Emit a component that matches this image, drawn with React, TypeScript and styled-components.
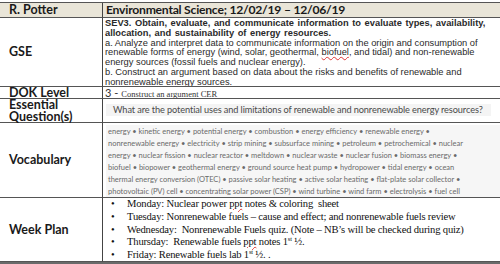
import React from "react";
import styled, { createGlobalStyle } from "styled-components";

const Global = createGlobalStyle`
  html, body { margin: 0; padding: 0; background: #ffffff; }
  body { width: 500px; height: 264px; overflow: hidden; }
`;

const Page = styled.div`
  width: 500px;
  height: 264px;
  padding-top: 2px;
  box-sizing: border-box;
  background: #fff;
`;

const Table = styled.div`
  display: grid;
  grid-template-columns: 103px 1fr;
  border-top: 1px solid #555;
  border-bottom: 2px solid #6a6a6a;
`;

const Label = styled.div<{ $h: number; $bg?: string }>`
  height: ${(p) => p.$h}px;
  box-sizing: border-box;
  border-bottom: 1px solid #555;
  border-right: 1px solid #444;
  background: ${(p) => p.$bg || "#fff"};
  font-family: "Lato", "DejaVu Sans", sans-serif;
  font-weight: 700;
  font-size: 12.5px;
  line-height: 11.5px;
  color: #1a1a1a;
  padding-left: 9px;
  display: flex;
  align-items: center;
`;

const Cell = styled.div<{ $h: number; $bg?: string }>`
  height: ${(p) => p.$h}px;
  box-sizing: border-box;
  border-bottom: 1px solid #555;
  background: ${(p) => p.$bg || "#fff"};
  overflow: hidden;
`;

const HeaderText = styled.div`
  font-family: "Lato", "DejaVu Sans", sans-serif;
  font-weight: 700;
  font-size: 12.2px;
  letter-spacing: -0.25px;
  line-height: 14px;
  color: #1a1a1a;
  padding-left: 3px;
`;

const Gse = styled.div`
  font-family: "Liberation Sans", Arial, sans-serif;
  font-size: 9.3px;
  line-height: 9.8px;
  color: #2a2a2a;
  padding: 1px 0 0 2px;
  white-space: nowrap;
`;

const B = styled.span`
  font-weight: 700;
  word-spacing: 1px;
`;

const Squiggle = styled.span`
  text-decoration: underline wavy #d33;
  text-decoration-thickness: 1px;
  text-underline-offset: 1px;
`;

const Dok = styled.div`
  display: flex;
  align-items: baseline;
  gap: 3px;
  padding-left: 2px;
  color: #333;
`;

const DokNum = styled.span`
  font-family: "Lato", "DejaVu Sans", sans-serif;
  font-size: 11px;
  line-height: 11px;
`;

const DokText = styled.span`
  font-family: "Liberation Serif", "Times New Roman", serif;
  font-size: 8.5px;
  line-height: 11px;
`;

const QuestionBox = styled.div`
  display: inline-block;
  margin: 3px 0 0 3px;
  padding: 0 8px 0 7px;
  background: #f4f4f4;
  font-family: "Lato", "DejaVu Sans", sans-serif;
  font-size: 9.2px;
  letter-spacing: -0.1px;
  line-height: 12px;
  color: #4a4a4a;
  white-space: nowrap;
`;

const VocabBox = styled.div`
  margin: 2px 0 0 3px;
  background: #f6f6f6;
  font-family: "Lato", "DejaVu Sans", sans-serif;
  font-size: 7.5px;
  line-height: 12px;
  color: #6a6a6a;
  padding: 1px 0 1px 2px;
  white-space: nowrap;
`;

const WeekList = styled.ul`
  list-style: none;
  margin: 0;
  padding: 0 0 0 8px;
  font-family: "Liberation Serif", "Times New Roman", serif;
  font-size: 10.6px;
  letter-spacing: -0.18px;
  line-height: 12.8px;
  color: #111;
`;

const WeekItem = styled.li`
  display: flex;
  white-space: nowrap;
`;

const Dot = styled.span`
  width: 16px;
  flex: none;
`;

const Sup = styled.sup`
  font-size: 6.5px;
  line-height: 0;
  vertical-align: 4px;
`;

const vocab = [
  "energy • kinetic energy • potential energy • combustion • energy efficiency • renewable energy •",
  "nonrenewable energy • electricity • strip mining • subsurface mining • petroleum • petrochemical • nuclear",
  "energy • nuclear fission • nuclear reactor • meltdown • nuclear waste • nuclear fusion • biomass energy •",
  "biofuel • biopower • geothermal energy • ground source heat pump • hydropower • tidal energy • ocean",
  "thermal energy conversion (OTEC) • passive solar heating • active solar heating • flat-plate solar collector •",
  "photovoltaic (PV) cell • concentrating solar power (CSP) • wind turbine • wind farm • electrolysis • fuel cell",
];

export default function App() {
  return (
    <Page>
      <Global />
      <Table>
        <Label $h={15} $bg="#e9e5d8">R. Potter</Label>
        <Cell $h={15} $bg="#e9e5d8">
          <HeaderText>Environmental Science; 12/02/19 – 12/06/19</HeaderText>
        </Cell>

        <Label $h={69}>GSE</Label>
        <Cell $h={69}>
          <Gse>
            <B>SEV3. Obtain, evaluate, and communicate information to evaluate types, availability,</B>
            <br />
            <B>allocation, and sustainability of energy resources.</B>
            <br />
            a. Analyze and interpret data to communicate information on the origin and consumption of
            <br />
            renewable forms of energy (wind, solar, geothermal, <Squiggle>biofuel</Squiggle>, and tidal) and non-renewable
            <br />
            energy sources (fossil fuels and nuclear energy).
            <br />
            b. Construct an argument based on data about the risks and benefits of renewable and
            <br />
            nonrenewable energy sources.
          </Gse>
        </Cell>

        <Label $h={12}>DOK Level</Label>
        <Cell $h={12}>
          <Dok>
            <DokNum>3 -</DokNum>
            <DokText>Construct an argument CER</DokText>
          </Dok>
        </Cell>

        <Label $h={24}>Essential<br />Question(s)</Label>
        <Cell $h={24}>
          <QuestionBox>
            What are the potential uses and limitations of renewable and nonrenewable energy resources?
          </QuestionBox>
        </Cell>

        <Label $h={75}>Vocabulary</Label>
        <Cell $h={75}>
          <VocabBox>
            {vocab.map((l, i) => (
              <div key={i}>{l}</div>
            ))}
          </VocabBox>
        </Cell>

        <Label $h={64}>Week Plan</Label>
        <Cell $h={64}>
          <WeekList>
            <WeekItem><Dot>•</Dot><span>Monday: Nuclear power <Squiggle>ppt</Squiggle> notes &amp; coloring&nbsp; sheet</span></WeekItem>
            <WeekItem><Dot>•</Dot><span>Tuesday: Nonrenewable fuels – cause and effect; and nonrenewable fuels review</span></WeekItem>
            <WeekItem><Dot>•</Dot><span>Wednesday:&nbsp; Nonrenewable Fuels quiz. (Note – NB’s will be checked during quiz)</span></WeekItem>
            <WeekItem><Dot>•</Dot><span>Thursday:&nbsp; Renewable fuels <Squiggle>ppt</Squiggle> notes 1<Sup>st</Sup> ½.</span></WeekItem>
            <WeekItem><Dot>•</Dot><span>Friday: Renewable fuels lab 1<Sup>st</Sup> ½. .</span></WeekItem>
          </WeekList>
        </Cell>
      </Table>
    </Page>
  );
}
